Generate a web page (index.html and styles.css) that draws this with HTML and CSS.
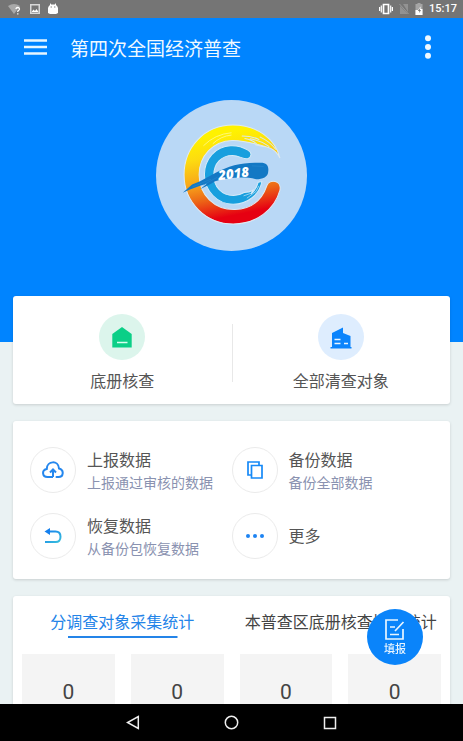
FILE: index.html
```html
<!DOCTYPE html>
<html lang="zh-CN">
<head>
    <meta charset="UTF-8">
    <meta name="viewport" content="width=device-width, initial-scale=1.0">
    <title>第四次全国经济普查</title>
    <link rel="stylesheet" href="styles.css">
</head>
<body>

<div class="status-bar">
    <div class="status-icons">
        <svg width="14" height="12" viewBox="0 0 14 12">
            <path d="M0 3Q6 -1 12 3L6 11Z" fill="#a9a9a9"/>
            <path d="M8 6Q8 4.500 9.700 4.500T11.500 6Q11.500 7 9.800 8V9M9.800 10.200V11.500" fill="none" stroke="#fff" stroke-width="1.300"/>
        </svg>
        <svg width="10" height="10" viewBox="0 0 10 10">
            <path d="M0 0H10V10H0ZM1.500 1.500V8.500H8.500V1.500Z" fill="#d8d8d8" fill-rule="evenodd"/>
            <path d="M1.500 8L3.500 5.500L5 7L6.500 5L8.500 8Z" fill="#fff"/>
        </svg>
        <svg width="10" height="12" viewBox="0 0 10 12">
            <path d="M2 0L3.200 1.500H6.800L8 0V2Q9.500 3 10 5V10L8 11H2L0 10V5Q0.500 3 2 2Z" fill="#fff"/>
            <circle cx="3.200" cy="4" r=".7" fill="#888"/>
            <circle cx="6.800" cy="4" r=".7" fill="#888"/>
        </svg>
    </div>
    <div class="status-icons status-right">
        <svg width="14" height="12" viewBox="0 0 14 12">
            <path d="M4.500 1.500H9.500V10.500H4.500Z" fill="none" stroke="#fff" stroke-width="1.700"/>
            <path d="M2.300 2.500V9.500M11.700 2.500V9.500M.6 4V8M13.400 4V8" stroke="#fff" stroke-width="1.200"/>
        </svg>
        <svg width="10" height="12" viewBox="0 0 10 12">
            <path d="M1 3L9 11H1ZM4 1H9V9Z" fill="#929292"/>
            <path d="M.5 1L9.500 11" stroke="#999"/>
        </svg>
        <svg width="8" height="12" viewBox="0 0 8 12">
            <path d="M2.500 0H5.500V1H7.500V12H.5V1H2.500Z" fill="#a5a5a5"/>
            <path d="M.5 7L3 7L5.500 3.500V6H7.500V12H.5Z" fill="#fff"/>
            <path d="M5 5L2.800 8H4.300V10L6 7H4.800Z" fill="#777"/>
        </svg>
        <span class="clock">15:17</span>
    </div>
</div>

<main class="content">
    <header class="hero">
        <div class="app-bar">
            <button class="icon-btn" aria-label="菜单">
                <svg width="23" height="16" viewBox="0 0 23 16">
                    <path d="M0 1.500H23M0 8H23M0 14.500H23" stroke="#e6f5ff" stroke-width="2.500"/>
                </svg>
            </button>
            <h1>第四次全国经济普查</h1>
            <button class="icon-btn" aria-label="更多选项">
                <svg width="8" height="24" viewBox="0 0 8 24" fill="#eef8ff">
                    <circle cx="4" cy="3.300" r="3"/>
                    <circle cx="4" cy="12" r="3"/>
                    <circle cx="4" cy="20.700" r="3"/>
                </svg>
            </button>
        </div>
        <svg class="logo" viewBox="18 16 452 452">
            <defs>
                <linearGradient id="ring" x1="0.300" y1="0" x2="0.500" y2="1">
                    <stop offset="0.100" stop-color="#fff200"/>
                    <stop offset="0.300" stop-color="#fddc10"/>
                    <stop offset="0.550" stop-color="#f7a51a"/>
                    <stop offset="0.720" stop-color="#ec6416"/>
                    <stop offset="0.920" stop-color="#e60012"/>
                </linearGradient>
            </defs>
            <circle cx="244" cy="242" r="226" fill="#b9d8f6"/>
            <!-- 外圈 -->
            <path d="M389 190C376 132 320 91 248 91C164 91 102 157 102 240C102 323 168 387 249 387C318 387 373 345 389 286C395 258 358 250 350 272C336 314 304 342 254 344C193 345 147 300 147 240C147 182 190 139 246 137C286 136 334 152 360 160C373 166 382 175 389 190Z" fill="url(#ring)" stroke="#dfeaf2" stroke-width="3"/>
            <path d="M160 153Q195 118 244 114M188 147Q212 124 244 121" fill="none" stroke="#fffbb0" stroke-width="2"/>
            <path d="M276 124Q304 124 326 134M300 132Q332 138 356 155M284 131Q306 135 318 146M330 127Q358 140 376 163M316 150L342 156" fill="none" stroke="#dce8ee" stroke-width="3" stroke-linecap="round"/>
            <!-- 内圈 -->
            <path d="M293 192C306 184 305 173 293 166C276 156 260 152 241 153C196 155 163 193 163 239C163 288 202 328 249 328C292 328 328 299 335 260L324 262Q319 284 302 298L308 286Q298 292 282 293C272 299 262 302 250 302C215 302 191 276 191 241C191 206 214 182 247 182C268 182 277 194 293 192Z" fill="#189fde" stroke="#d4eaf8" stroke-width="3"/>
            <path d="M280 303L303 295M290 310L317 290L326 273" fill="none" stroke="#cbe7f8" stroke-width="2"/>
            <!-- 笔刷 -->
            <path d="M98 294L126 269L150 259L194 235C238 211 281 201 331 204C350 204 356 214 354 229C354 246 337 253 318 253C277 244 235 249 195 259L184 266L150 283L172 265L144 275L118 285Z" fill="#1378c4"/>
            <path d="M127 276L183 253M160 270L202 247M305 213L340 215" fill="none" stroke="#2487ce" stroke-width="2"/>
            <text class="logo-year" x="206" y="256" transform="rotate(-7 206 256)">2018</text>
        </svg>
    </header>

    <section class="card entries">
        <a class="entry" href="#">
            <svg width="46" height="46" viewBox="0 0 46 46">
                <circle cx="23" cy="23" r="23" fill="#dcf5ec"/>
                <path d="M23 13L32.700 20V33.500H13.300V20Z" fill="#0bcf87"/>
                <path d="M18 28.500H28.500" stroke="#d6ffef" stroke-width="1.500"/>
            </svg>
            <span>底册核查</span>
        </a>
        <a class="entry" href="#">
            <svg width="46" height="46" viewBox="0 0 46 46">
                <circle cx="23" cy="23" r="23" fill="#deedfe"/>
                <path d="M14 33V19L25 13.500V19L32.500 22V33H33.500V34.500H12.500V33Z" fill="#0b84fc"/>
                <path d="M16.500 25.500H22.500M16.500 29.500H22.500M26 29.500H30" stroke="#eaf5ff" stroke-width="1.500"/>
            </svg>
            <span>全部清查对象</span>
        </a>
    </section>

    <section class="card actions">
        <a class="action" href="#">
            <span class="round">
                <svg width="22" height="18" viewBox="0 0 22 18" fill="none" stroke="#2487ee" stroke-width="2">
                    <path d="M8 16H5.500C0 16 -.5 9 4.800 8C4.800 -.5 16.500 -1 17 7.500C22.500 9 21.500 16 16.500 16H14.500" stroke-linecap="round"/>
                    <path d="M11 16V9M8 11.500L11 8.500L14 11.500M8 16H11"/>
                </svg>
            </span>
            <span class="action-text">
                <strong>上报数据</strong>
                <small>上报通过审核的数据</small>
            </span>
        </a>
        <a class="action" href="#">
            <span class="round">
                <svg width="16" height="18" viewBox="0 0 16 18" fill="none" stroke="#1689f7" stroke-width="1.700">
                    <path d="M4 14H1V1H12V4M4.500 4.500H15V17H4.500Z"/>
                </svg>
            </span>
            <span class="action-text">
                <strong>备份数据</strong>
                <small>备份全部数据</small>
            </span>
        </a>
        <a class="action" href="#">
            <span class="round">
                <svg width="18" height="16" viewBox="0 0 18 16">
                    <defs>
                        <linearGradient id="undo" x1="0" y1="0" x2="1" y2="1">
                            <stop offset="0" stop-color="#1580ee"/>
                            <stop offset="1" stop-color="#39bfdc"/>
                        </linearGradient>
                    </defs>
                    <path d="M3 3.500H11.500Q16.500 3.500 16.500 8.800T11.500 14H1" fill="none" stroke="url(#undo)" stroke-width="2"/>
                    <path d="M.5 3.500L6 0V7Z" fill="#1580ee"/>
                </svg>
            </span>
            <span class="action-text">
                <strong>恢复数据</strong>
                <small>从备份包恢复数据</small>
            </span>
        </a>
        <a class="action" href="#">
            <span class="round">
                <svg width="18" height="4" viewBox="0 0 18 4" fill="#1d83f2">
                    <circle cx="2" cy="2" r="2"/>
                    <circle cx="9" cy="2" r="2"/>
                    <circle cx="16" cy="2" r="2"/>
                </svg>
            </span>
            <span class="action-text">
                <strong>更多</strong>
            </span>
        </a>
    </section>

    <section class="card stats">
        <div class="tabs">
            <button class="tab active">分调查对象采集统计</button>
            <button class="tab">本普查区底册核查情况统计</button>
        </div>
        <div class="numbers">
            <div class="number">0</div>
            <div class="number">0</div>
            <div class="number">0</div>
            <div class="number">0</div>
        </div>
    </section>
</main>

<button class="fab">
    <svg width="20" height="21" viewBox="0 0 20 21" fill="none" stroke="#e8f5ff" stroke-width="1.700">
        <path d="M13 1H1V20H18V10"/>
        <path d="M10 12L18.500 3M5 8H10M5 15.500H14"/>
    </svg>
    <span>填报</span>
</button>

<nav class="nav-bar">
    <button class="icon-btn" aria-label="返回">
        <svg width="14" height="15" viewBox="0 0 14 15">
            <path d="M12.300 1.500V13.500L1.500 7.500Z" fill="none" stroke="#eee" stroke-width="1.500"/>
        </svg>
    </button>
    <button class="icon-btn" aria-label="主屏幕">
        <svg width="15" height="15" viewBox="0 0 15 15">
            <circle cx="7.500" cy="7.500" r="6.200" fill="none" stroke="#eee" stroke-width="1.500"/>
        </svg>
    </button>
    <button class="icon-btn" aria-label="最近任务">
        <svg width="14" height="14" viewBox="0 0 14 14">
            <path d="M1.500 1.500H12.500V12.500H1.500Z" fill="none" stroke="#eee" stroke-width="1.500"/>
        </svg>
    </button>
</nav>

</body>
</html>
```
FILE: styles.css
```css
* {
    box-sizing: border-box;
}
body {
    margin: 0;
    height: 100vh;
    display: flex;
    flex-direction: column;
    background: #eaf2f3;
    color: #555;
    font-family: Roboto, "Noto Sans CJK SC", sans-serif;
    font-size: 16px;
}
svg {
    display: block;
    flex-shrink: 0;
}
a {
    color: inherit;
    text-decoration: none;
}
button {
    padding: 0;
    border: none;
    background: none;
    color: inherit;
    font: inherit;
    cursor: pointer;
}
.status-bar {
    flex: none;
    display: flex;
    justify-content: space-between;
    align-items: center;
    height: 18px;
    padding: 0 6px 0 8px;
    background: #757575;
}
.status-icons {
    display: flex;
    align-items: center;
    gap: 8px;
}
.status-right {
    gap: 6px;
}
.clock {
    color: #fff;
    font-size: 11px;
    font-weight: 500;
    line-height: 18px;
}
.content {
    flex: 1;
    min-height: 0;
    overflow: hidden;
}
.hero {
    height: 324px;
    background: #0084ff;
}
.app-bar {
    display: flex;
    align-items: center;
    height: 58px;
    padding: 0 31px 0 24px;
}
.app-bar h1 {
    flex: 1;
    margin: 0 0 0 23px;
    color: #f0f9ff;
    font-size: 19px;
    font-weight: 400;
}
.logo {
    width: 151px;
    height: 151px;
    margin: 24px auto 0;
}
.logo-year {
    fill: #fff;
    font-family: "Open Sans", sans-serif;
    font-size: 40px;
    font-style: italic;
    font-weight: 800;
}
/* 卡片 */
.card {
    margin: 0 13px 17px;
    background: #fff;
    border-radius: 3px;
    box-shadow: 0 1px 3px rgba(0, 0, 0, 0.15);
}
.entries {
    position: relative;
    display: flex;
    margin-top: -46px;
    padding: 18px 0 10px;
}
.entry {
    flex: 1;
    display: flex;
    flex-direction: column;
    align-items: center;
    gap: 10px;
    line-height: 24px;
}
.entry + .entry {
    position: relative;
}
.entry + .entry::before {
    content: "";
    position: absolute;
    left: 0;
    top: 10px;
    width: 1px;
    height: 58px;
    background: #e8e8e8;
}
.actions {
    display: grid;
    grid-template-columns: 1fr 1fr;
    row-gap: 20px;
    padding: 26px 17px 20px;
}
.action {
    display: flex;
    align-items: center;
    gap: 11px;
}
.round {
    flex: none;
    display: flex;
    justify-content: center;
    align-items: center;
    width: 46px;
    height: 46px;
    border: 1px solid #ebebeb;
    border-radius: 50%;
}
.action-text {
    display: flex;
    flex-direction: column;
    padding-top: 2px;
    white-space: nowrap;
}
.action-text strong {
    font-weight: 400;
    line-height: 24px;
}
.action-text small {
    color: #8a92b0;
    font-size: 14px;
    line-height: 20px;
}
/* 统计 */
.stats {
    padding: 14px 9px 16px;
}
.tabs {
    display: flex;
    margin: 0 -9px;
}
.tab {
    flex: 1 1 0;
    height: 28px;
    padding-bottom: 2px;
    color: #444;
    line-height: 26px;
    white-space: nowrap;
}
.tab.active {
    color: #2484e8;
    background: linear-gradient(#2484e8, #2484e8) center bottom / 50% 2px no-repeat;
}
.numbers {
    display: grid;
    grid-template-columns: repeat(4, 1fr);
    gap: 16px;
    margin-top: 16px;
}
.number {
    height: 76px;
    background: #f4f4f4;
    color: #444;
    font-size: 21px;
    line-height: 76px;
    text-align: center;
}
.fab {
    position: fixed;
    right: 40px;
    bottom: 76px;
    display: flex;
    flex-direction: column;
    align-items: center;
    justify-content: center;
    gap: 2px;
    width: 56px;
    height: 56px;
    padding-top: 3px;
    border-radius: 50%;
    background: #0a84fa;
    color: #e8f5ff;
    font-size: 11px;
    font-weight: 500;
    line-height: 16px;
}
.nav-bar {
    position: relative;
    flex: none;
    display: flex;
    justify-content: center;
    align-items: center;
    gap: 84px;
    height: 37px;
    background: #000;
}
```
